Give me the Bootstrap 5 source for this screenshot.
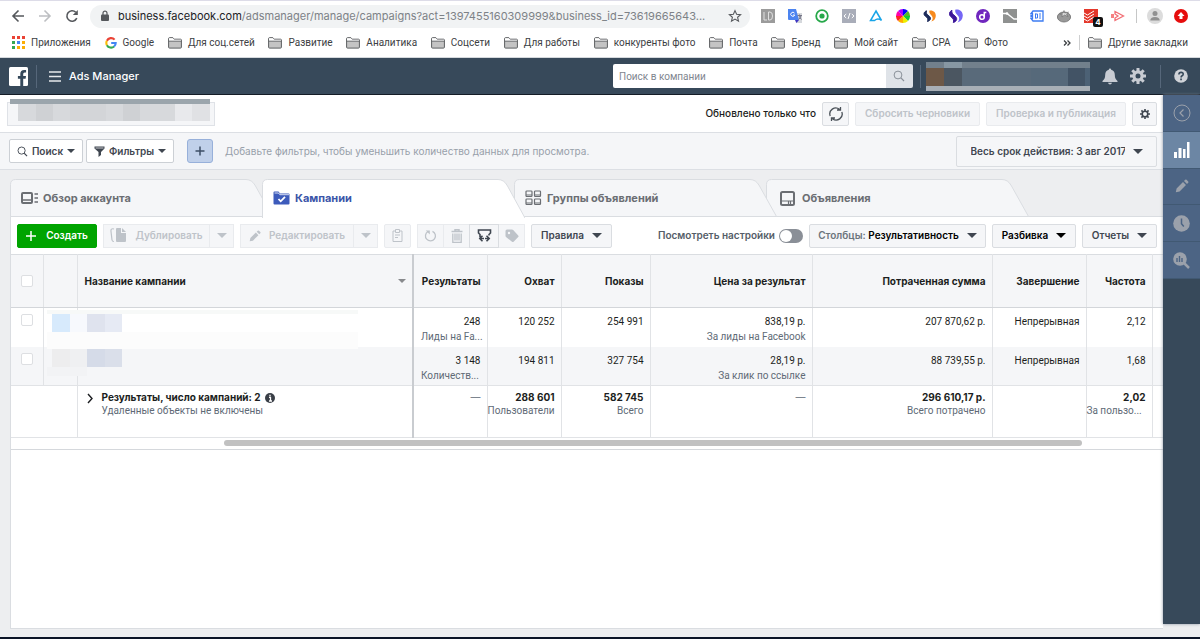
<!DOCTYPE html>
<html lang="ru">
<head>
<meta charset="utf-8">
<meta name="viewport" content="width=device-width, initial-scale=1">
<title>Ads Manager</title>
<link href="https://cdn.jsdelivr.net/npm/bootstrap@5.3.0/dist/css/bootstrap.min.css" rel="stylesheet">
<style>
  :root { --ui: Inter, "Liberation Sans", sans-serif; --text: Roboto, "Liberation Sans", sans-serif; --line: #dadde1; --pale: #f5f6f8; --slate: #37495a; }
  body { font: 10px/15px var(--ui); color: #1c1e21; background: #edeef0; }
  svg { display: block; flex: none; }
  a, a:hover { color: inherit; text-decoration: none; }
  button { font-weight: 600; }

  /* browser chrome */
  .chrome { background: #fff; border-top: 1px solid #dddce8; }
  .chrome-row { height: 30px; padding: 0 12px 0 11px; gap: 13px; }
  .omnibox { background: #f1f3f4; border-radius: 12px; height: 23px; padding: 0 8px 0 10px; font-size: 11px; color: #7d8287; margin-left: -2px; }
  .omnibox b { color: #202124; font-weight: 400; }
  .icon-btn { border: 0; background: none; padding: 0; color: inherit; }
  .extensions { width: 364px; margin-left: -2px; }
  .chrome-rule { margin: 0 -3px 0 -2px; height: 14px; }
  .chrome-end { gap: 11px; }
  .ext-count { position: absolute; left: 9px; top: 8px; width: 10px; height: 10px; background: #111; color: #fff; font: bold 8px/10px var(--ui); text-align: center; border-radius: 2px; }
  .bookmarks { height: 27px; padding: 0 12px 3px; font-family: var(--text); color: #3c4043; border-bottom: 1px solid #d5d9dd; }
  .bookmarks a { display: flex; align-items: center; gap: 6px; white-space: nowrap; }
  .bookmark-list { width: 996px; }

  /* product bar */
  .topbar { background: var(--slate); height: 37px; border-bottom: 1px solid #141c26; color: #fff; padding: 0 12px 0 9px; }
  .topbar .rule { width: 1px; height: 23px; background: #56677a; }
  .topbar .rule-search { margin: 0 5px 0 7px; }
  .topbar .rule-help { margin: 0 13px 0 14px; }
  .brand { font-size: 11px; font-weight: 500; }
  .company-search { width: 300px; height: 24px; }
  .company-search input { border: 0; font: 10px var(--text); padding: 0 6px; border-radius: 2px 0 0 2px; min-width: 0; }
  .company-search input::placeholder { color: #7f868f; opacity: 1; }
  .company-search button { width: 27px; background: #dfe3e8; border: 0; border-radius: 0 2px 2px 0; padding: 0 7px; color: #8a9199; }

  /* controls */
  .tool { height: 24px; padding: 0 8px; display: inline-flex; align-items: center; justify-content: center; gap: 8px; font: 600 10px/15px var(--ui); color: #3f4650; background: var(--pale); border: 1px solid var(--line); border-radius: 2px; white-space: nowrap; }
  .tool:disabled { color: #bec3c9; border-color: #e9ebee; opacity: 1; }
  .tool-plain { background: #fff; border-color: #ccd0d5; gap: 4px; padding: 0 7px; }
  .tool-add { width: 26px; background: #c0d0ea; border-color: #97b0da; border-radius: 3px; padding: 0; margin-left: 10px; }
  .tool-create, .tool-create:hover { background: #00a400; border-color: #00a400; color: #fff; gap: 10px; }
  .caret { width: 0; border: 5px solid transparent; border-top-color: currentColor; border-bottom: 0; flex: none; }
  .caret-sm { border-width: 4px 4px 0; }
  .segment .tool { border-radius: 0; padding: 0; }
  .segment .tool + .tool { margin-left: -1px; }
  .w-drop { width: 25px; } .w-icon { width: 27px; }
  .w-export { width: 30px; }
  .w-create { width: 80px; } .w-dup { width: 107px; } .w-edit { width: 114px; } .w-rules { width: 81px; }
  .w-cols { width: 177px; } .w-split { width: 84px; } .w-reports { width: 75px; } .w-reset { width: 125px; } .w-check { width: 140px; }
  .w-search { width: 74px; } .w-filter { width: 88px; }
  .account-row { background: #fff; height: 37px; padding: 0 6px 0 7px; gap: 6px; }
  .account-box { width: 208px; height: 24px; background: #f5f6f8; border: 1px solid #dfe2e7; }
  .updated { font-size: 10px; font-weight: 500; }
  .filter-row { background: var(--pale); height: 38px; padding: 0 6px 0 9px; gap: 3px; border: solid #dcdfe4; border-width: 1px 0; }
  .hint { color: #98a0aa; padding-left: 9px; }
  .date-tool { width: 201px; height: 31px; }
  .date-tool span:first-child { width: 154px; overflow: hidden; text-align: left; }

  /* tabs */
  .level-tabs { height: 46px; padding: 9px 0 0 10px; }
  .level-tab { width: 263px; height: 38px; margin-right: -11px; border: 0; background: none; padding: 0 11px; color: #6b6e73; font: 700 11px/15px var(--ui); text-align: left; display: flex; align-items: center; gap: 5px; position: relative; }
  .level-tab .shape { position: absolute; inset: 0; z-index: -1; }
  .level-tab .shape path { fill: var(--pale); stroke: var(--line); }
  .level-tab { isolation: isolate; z-index: 1; }
  .level-tab.chosen { z-index: 4; color: #3b55a8; font-weight: 700; }
  .level-tab.chosen .shape path { fill: #fff; }
  .level-tab:nth-child(3) { z-index: 3; } .level-tab:nth-child(4) { z-index: 2; padding-left: 14px; gap: 7px; }
  .sheet { background: #fff; border: solid var(--line); border-width: 1px 0 1px 1px; margin: 0 0 8px 10px; position: relative; }
  .toolbar { height: 37px; padding: 0 6px; gap: 6px; }

  /* switch */
  .preview-switch { width: 24px; height: 14px; appearance: none; border-radius: 7px; background: #8a8f97; position: relative; margin: 0; }
  .preview-switch::before { content: ""; position: absolute; left: 1px; top: 1px; width: 12px; height: 12px; border-radius: 50%; background: #fff; }
  .preview-group { gap: 4px; }
  .preview-label { color: #555d68; font-weight: 600; }

  /* campaign table */
  .campaigns { table-layout: fixed; width: 100%; border-collapse: collapse; border-top: 1px solid var(--line); }
  .campaigns th, .campaigns td { border-right: 1px solid #e1e3e6; padding: 6px 6px 0 7px; text-align: right; vertical-align: top; white-space: nowrap; font: 10px/15px var(--text); }
  .campaigns th:last-child, .campaigns td:last-child { border-right: 0; }
  .campaigns thead th { background: var(--pale); height: 53px; vertical-align: middle; padding-top: 0; font: 700 10px/15px var(--ui); border-bottom: 1px solid #d3d6da; }
  .campaigns .name-col { border-right: 2px solid #c9ccd0; text-align: left; }
  .campaigns tbody tr { height: 39px; }
  .campaigns tbody tr:nth-child(2) td { background: var(--pale); border-bottom: 1px solid #e1e3e6; }
  .campaigns small { display: block; font-size: 10px; color: #606a76; }
  .campaigns tfoot tr { height: 52px; }
  .campaigns tfoot td { padding: 5px 6px 0 0; font: 700 10px/13px var(--ui); border-bottom: 1px solid #e1e3e6; }
  .campaigns tfoot small { font: 10px/13px var(--text); }
  .campaigns .dash { color: #606a76; font-weight: 400; }
  .campaigns input { appearance: none; display: block; width: 12px; height: 12px; border: 1px solid #dddfe2; border-radius: 2px; background: #fff; margin: 0 0 0 3px; }
  .hidden-names { position: absolute; left: 36px; top: 56px; }
  .scroll-track { height: 12px; padding-top: 2px; border-bottom: 1px solid #d5d8dc; }
  .scroll-thumb { height: 6px; border-radius: 3px; background: #c1c1c1; }

  /* right rail */
  .rail { width: 37px; background: var(--slate); margin-bottom: 13px; box-shadow: 0 0 3px #8a94a0; z-index: 5; }
  .rail-items { display: grid; grid-auto-rows: 1fr; height: 184px; }
  .rail-items button { border: 0; border-bottom: 1px solid #415973; background: #4c6484; color: #9ba1ab; display: flex; align-items: center; justify-content: center; padding: 0; }
  .rail-items button.on { background: #6c86a4; color: #fff; }
  .window-edge { height: 2px; background: #0b1426; }
</style>
</head>
<body class="d-flex flex-column min-vh-100">

<svg width="0" height="0" class="position-absolute" aria-hidden="true">
  <symbol id="folder" viewBox="0 0 14 12"><path d="M.6 10.2V1.6q0-.9.9-.9h3.4l1.3 1.5h6.3q.9 0 .9.9v7.1q0 .9-.9.9h-11q-.9 0-.9-.9z" fill="#c4c4c4" stroke="#5c5e61"/><path d="M1 1.2h4l1.2 1.5H13v1.1H1z" fill="#fff"/><path d="M.6 4.2h12.8" stroke="#5c5e61" stroke-width=".8"/></symbol>
  <symbol id="lens" viewBox="0 0 12 12"><circle cx="5" cy="5" r="3.9" fill="none" stroke="currentColor"/><path d="M7.9 7.9 11 11" stroke="currentColor" stroke-width="1.2"/></symbol>
  <symbol id="cog" viewBox="0 0 16 16"><circle cx="8" cy="8" r="4.1" fill="none" stroke="currentColor" stroke-width="3.2"/><path d="M8 0v3M8 13v3M0 8h3M13 8h3M2.3 2.3l2.2 2.2M11.5 11.5l2.2 2.2M2.3 13.7l2.2-2.2M11.5 4.5l2.2-2.2" stroke="currentColor" stroke-width="3"/></symbol>
  <symbol id="pencil" viewBox="0 0 14 14"><path d="M.8 13.2 1.6 9.4 8 3l3 3-6.4 6.4zM9 2l1.2-1.2q.7-.6 1.4 0L13.2 2.4q.6.7 0 1.4L12 5z" fill="currentColor"/></symbol>
</svg>

<header class="chrome">
  <div class="chrome-row d-flex align-items-center">
    <button class="icon-btn" aria-label="Назад"><svg width="14" height="14" viewBox="0 0 14 14" fill="none" stroke="#55585c" stroke-width="1.6"><path d="M13 7H2M7.5 1.500 2 7l5.500 5.500"/></svg></button>
    <button class="icon-btn" aria-label="Вперёд"><svg width="14" height="14" viewBox="0 0 14 14" fill="none" stroke="#bdbfc2" stroke-width="1.600"><path d="M1 7h11M6.500 1.500 12 7l-5.500 5.500"/></svg></button>
    <button class="icon-btn" aria-label="Обновить"><svg width="14" height="14" viewBox="0 0 14 14"><path d="M11.800 9.200A5.200 5.200 0 1 1 10.800 3.300" fill="none" stroke="#55585c" stroke-width="1.600"/><path d="M12.800 1v5H7.800z" fill="#55585c"/></svg></button>
    <div class="omnibox d-flex align-items-center flex-grow-1 gap-2">
      <svg width="10" height="12" viewBox="0 0 10 12"><rect x="1" y="4.500" width="8" height="6.500" rx="1" fill="#55585c"/><path d="M3 5V3.200a2 2 0 0 1 4 0V5" fill="none" stroke="#55585c" stroke-width="1.200"/></svg>
      <span class="flex-grow-1 text-nowrap"><b>business.facebook.com</b>/adsmanager/manage/campaigns?act=1397455160309999&amp;business_id=73619665643...</span>
      <button class="icon-btn" aria-label="В закладки"><svg width="14" height="14" viewBox="0 0 14 14"><path d="m7 1.600 1.600 3.700 4 .3-3 2.700.9 3.900L7 10.100l-3.500 2.100.9-3.900-3-2.700 4-.3z" fill="none" stroke="#55585c" stroke-width="1.100"/></svg></button>
    </div>
    <div class="extensions d-flex align-items-center justify-content-between">
      <svg width="14" height="14" viewBox="0 0 14 14"><path fill="#9b9b9b" d="M0 0h14v14H0z"/><path d="M3 3v8h3M7.500 3v8h1.500q2.500 0 2.500-4t-2.500-4z" fill="none" stroke="#e0e0e0"/></svg>
      <svg width="14" height="14" viewBox="0 0 14 14"><path d="M5 4h9v10H8z" fill="#d5d8dc"/><path d="M0 0h8l3 11H1q-1 0-1-1z" fill="#4c84f0"/><path d="m7 11 4 0-2.500 3z" fill="#3d33c5"/><path d="M6.500 4.200A2 2 0 1 0 6.700 6H5" fill="none" stroke="#fff"/><path d="M9.500 6.500H14M11.500 5.500v1q0 2.500 2 4M13 6.500q0 2-2.500 4" fill="none" stroke="#778"/></svg>
      <svg width="14" height="14" viewBox="0 0 14 14"><circle cx="7" cy="7" r="5.800" fill="#fff" stroke="#27a84a" stroke-width="1.800"/><circle cx="7" cy="7" r="2.600" fill="#27a84a"/></svg>
      <svg width="14" height="14" viewBox="0 0 14 14"><path fill="#a9adb9" d="M0 0h14v14H0z"/><path d="M4.200 5 2 7l2.200 2M9.800 5 12 7l-2.200 2M8 4 6 10" fill="none" stroke="#fff"/></svg>
      <svg width="14" height="14" viewBox="0 0 14 14"><path d="M7 2 12.500 11.500q-3.500-3-7 0H1.500z" fill="none" stroke="#18a5e8" stroke-width="1.500"/></svg>
      <svg width="14" height="14" viewBox="0 0 14 14"><path d="M7 7V0a7 7 0 0 1 5 2z" fill="#00f"/><path d="m7 7 5-5a7 7 0 0 1 2 5z" fill="#5b2"/><path d="M7 7h7a7 7 0 0 1-2 5z" fill="#1c3"/><path d="m7 7 5 5a7 7 0 0 1-5 2z" fill="#ee0"/><path d="M7 7v7a7 7 0 0 1-5-2z" fill="#fa0"/><path d="m7 7-5 5a7 7 0 0 1-2-5z" fill="#f22"/><path d="M7 7H0a7 7 0 0 1 2-5z" fill="#f0a"/><path d="M7 7 2 2a7 7 0 0 1 5-2z" fill="#a0f"/></svg>
      <svg width="14" height="14" viewBox="0 0 14 14"><path d="M3.500 1.800C.5 3 .3 5.800 2.500 7.300S5.500 10.500 4.500 12.500C8 11.500 8.300 8.500 6 7S2.800 3.800 3.500 1.800z" fill="#1d2b5a" stroke="#1d2b5a"/><path d="M6.500 1.500c4-.5 6.500 2 6.300 5.500-.2 3-2 5-4.500 5.500C10 10.500 10.200 8.300 8.500 6.500S5.800 3.500 6.500 1.500z" fill="#f78a1d"/></svg>
      <svg width="14" height="14" viewBox="0 0 14 14"><path d="M3 1.300C-.2 2.800-.3 6 2 7.800s3.300 3.700 2.300 5.700C8.200 12.500 8.700 9 6 7S2.300 3.500 3 1.300z" fill="#3c1599" stroke="#3c1599"/><path d="M6.500.5c4.500-.7 7.500 2.300 7.300 6.300-.2 3.500-2.300 6-5.300 6.700 2-2.300 2.300-5 .3-7S5.600 2.800 6.500.5z" fill="#7566f5"/></svg>
      <svg width="14" height="14" viewBox="0 0 14 14"><circle cx="7" cy="7" r="7" fill="#7027be"/><circle cx="6" cy="8" r="2.300" fill="none" stroke="#fff" stroke-width="1.500"/><path d="M8.300 8V3.500h2" fill="none" stroke="#fff" stroke-width="1.500"/></svg>
      <svg width="14" height="14" viewBox="0 0 14 14"><path fill="#8f9190" d="M0 0h14v14H0z"/><path d="M0 4.500h4L11 10h3" fill="none" stroke="#fff" stroke-width="1.300"/><circle cx="4" cy="4.500" r="1.300" fill="#fff"/></svg>
      <svg width="14" height="14" viewBox="0 0 14 14"><path d="M3 2h10v10H3L1 9.500h1.500v-2H1v-1h1.500v-2H1z" fill="#fff" stroke="#3d7cf2" stroke-width="1.300"/><path d="M5.500 4.500v5M5.500 5h2v4h-2M9 5h2M9 7h2M9 9h2" fill="none" stroke="#3d7cf2"/></svg>
      <svg width="14" height="14" viewBox="0 0 14 14"><ellipse cx="7" cy="8" rx="6.600" ry="5" fill="#999" stroke="#6d6d6d" stroke-width=".8"/><path d="M7 1.500 7.700 4l3.800-.8L9.500 5l1.500 2.500L7.500 6 5 8l.3-2.500L2.500 5l3.700-1z" fill="#ddd" stroke="#666" stroke-width=".6"/></svg>
      <span class="position-relative"><svg width="14" height="14" viewBox="0 0 14 14"><path fill="#e4372b" d="M0 0h14v14H0z"/><path d="m0 4 3.500 2L10 2M0 7l3.500 2L10 5M0 10l3.500 2L10 8" fill="none" stroke="#fff"/></svg><span class="ext-count">4</span></span>
      <svg width="14" height="14" viewBox="0 0 14 14"><path d="M0 5h3v4H0z" fill="#f68080"/><path d="M4 2.500V5l3 2-3 2v2.500L12.500 7z" fill="none" stroke="#f26e74" stroke-width="1.300"/></svg>
    </div>
    <div class="vr chrome-rule align-self-center"></div>
    <div class="chrome-end d-flex align-items-center">
      <button class="icon-btn" aria-label="Профиль"><svg width="16" height="16" viewBox="0 0 16 16"><circle cx="8" cy="8" r="8" fill="#dcdcdc"/><circle cx="8" cy="5.500" r="2.500" fill="#919191"/><path d="M3.300 12.500q0-3.500 4.700-3.500t4.700 3.500z" fill="#919191"/></svg></button>
      <button class="icon-btn" aria-label="Обновление"><svg width="14" height="14" viewBox="0 0 14 14"><circle cx="7" cy="7" r="7" fill="#e60d0d"/><path d="M7 3 3.500 7H5.500v3h3V7h2z" fill="#fff"/></svg></button>
    </div>
  </div>
  <nav class="bookmarks d-flex align-items-center justify-content-between">
    <div class="bookmark-list d-flex justify-content-between">
      <a href="#"><svg width="13" height="13" viewBox="0 0 13 13"><path d="M0 0h3v3H0zM5 0h3v3H5zM10 0h3v3h-3z" fill="#ea4335"/><path d="M0 5h3v3H0z" fill="#34a853"/><path d="M5 5h3v3H5z" fill="#4285f4"/><path d="M10 5h3v3h-3zM5 10h3v3H5zM10 10h3v3h-3z" fill="#fbae05"/><path d="M0 10h3v3H0z" fill="#34a853"/></svg>Приложения</a>
      <a href="#"><svg width="12" height="12" viewBox="0 0 12 12" fill="none" stroke-width="2.100"><path d="M9.600 2.600A4.700 4.700 0 0 0 1.900 3.800" stroke="#ea4335"/><path d="M1.900 3.800a4.700 4.700 0 0 0 0 4.400" stroke="#fbbc05"/><path d="M1.900 8.200a4.700 4.700 0 0 0 7.200 1.300" stroke="#34a853"/><path d="M9.100 9.500A4.700 4.700 0 0 0 10.700 6H6.200" stroke="#4285f4"/></svg>Google</a>
      <a href="#"><svg width="14" height="12"><use href="#folder"/></svg>Для соц.сетей</a>
      <a href="#"><svg width="14" height="12"><use href="#folder"/></svg>Развитие</a>
      <a href="#"><svg width="14" height="12"><use href="#folder"/></svg>Аналитика</a>
      <a href="#"><svg width="14" height="12"><use href="#folder"/></svg>Соцсети</a>
      <a href="#"><svg width="14" height="12"><use href="#folder"/></svg>Для работы</a>
      <a href="#"><svg width="14" height="12"><use href="#folder"/></svg>конкуренты фото</a>
      <a href="#"><svg width="14" height="12"><use href="#folder"/></svg>Почта</a>
      <a href="#"><svg width="14" height="12"><use href="#folder"/></svg>Бренд</a>
      <a href="#"><svg width="14" height="12"><use href="#folder"/></svg>Мой сайт</a>
      <a href="#"><svg width="14" height="12"><use href="#folder"/></svg>CPA</a>
      <a href="#"><svg width="14" height="12"><use href="#folder"/></svg>Фото</a>
    </div>
    <div class="d-flex align-items-center gap-2">
      <button class="icon-btn" aria-label="Ещё закладки"><svg width="8" height="8" viewBox="0 0 8 8" fill="none" stroke="#3c4043" stroke-width="1.300"><path d="m1 1.500 2.500 2.500L1 6.500M4.500 1.500 7 4 4.500 6.500"/></svg></button>
      <div class="vr"></div>
      <a href="#"><svg width="14" height="12"><use href="#folder"/></svg>Другие закладки</a>
    </div>
  </nav>
</header>

<nav class="topbar d-flex align-items-center">
  <a href="#" aria-label="Facebook"><svg width="19" height="19" viewBox="0 0 19 19"><rect width="19" height="19" rx="1.500" fill="#fff"/><path d="M11.300 19v-7.200H8.900V8.900h2.400V6.800q0-3.900 3.900-3.900h1.900v2.700h-1.400q-1.500 0-1.500 1.500v1.800H17l-.4 2.900h-2.400V19z" fill="#34485a"/></svg></a>
  <div class="rule ms-2"></div>
  <button class="icon-btn ms-2 ps-1 pe-2" aria-label="Меню"><svg width="12" height="11" viewBox="0 0 12 11"><path d="M0 1h12M0 5.500h12M0 10h12" stroke="#e6e9ec" stroke-width="1.500"/></svg></button>
  <span class="brand">Ads Manager</span>
  <form class="company-search d-flex ms-auto" role="search">
    <input type="search" class="flex-grow-1" placeholder="Поиск в компании" aria-label="Поиск в компании">
    <button type="button" aria-label="Найти"><svg width="12" height="12"><use href="#lens"/></svg></button>
  </form>
  <div class="rule rule-search"></div>
  <svg width="164" height="29" viewBox="0 0 164 29" shape-rendering="crispEdges"><path fill="#596a7a" d="M0 0h164v29H0z"/><path fill="#72808c" d="M0 0h164v6H0z"/><path fill="#8797a3" d="M18 0h18v6H18z"/><path fill="#6d5847" d="M0 6h18v18H0z"/><path fill="#4b5661" d="M18 6h18v18H18z"/><path fill="#56697a" d="M105 6h37v18h-37z"/><path fill="#425365" d="M142 6h17v18h-17z"/><path fill="#4c6175" d="M159 6h5v18h-5z"/><path fill="#a8afb6" d="M0 24h164v5H0z"/></svg>
  <button class="icon-btn ms-2 ps-1" aria-label="Уведомления"><svg width="16" height="17" viewBox="0 0 16 17" fill="#c8ccd3"><path d="M8 .5q1.200 0 1.200 1.300 3.600 1 3.600 5 0 4.300 2.700 6.200v1H.5v-1q2.700-1.900 2.700-6.200 0-4 3.600-5Q6.800.5 8 .5zM6 14.800h4q-.4 1.700-2 1.700t-2-1.700z"/></svg></button>
  <button class="icon-btn ms-2 ps-1" aria-label="Настройки"><svg width="16" height="16" color="#c8ccd3"><use href="#cog"/></svg></button>
  <div class="rule rule-help"></div>
  <button class="icon-btn" aria-label="Справка"><svg width="14" height="14" viewBox="0 0 14 14"><circle cx="7" cy="7" r="6.800" fill="#d0d3d8"/><path d="M4.900 5.500q0-2.100 2.200-2.100t2.100 1.800q0 1-1.100 1.600T7.100 8.500" fill="none" stroke="#37495a" stroke-width="1.600"/><path d="M6.200 9.500h1.700v1.700H6.200z" fill="#37495a"/></svg></button>
</nav>

<div class="d-flex flex-grow-1">
  <main class="d-flex flex-column flex-grow-1 overflow-hidden">
    <div class="account-row d-flex align-items-center">
      <div class="account-box position-relative me-auto"><svg class="position-absolute bottom-0 start-0" width="203" height="27" viewBox="0 0 203 27" shape-rendering="crispEdges"><path fill="#9ba5ac" d="M2 1h200v5H2z"/><path fill="#d7d9dc" d="M10 6h157v17H10z"/><path fill="#cfd1d4" d="M28 6h17v17H28zM115 6h17v17h-17z"/><path fill="#d3d5d8" d="M62 6h36v17H62z"/><path fill="#e8e9ec" d="M167 6h17v17h-17z"/><path fill="#e0e1e4" d="M184 6h18v17h-18z"/></svg></div>
      <span class="updated">Обновлено только что</span>
      <button class="tool w-icon p-0" aria-label="Обновить данные"><svg width="16" height="16" viewBox="0 0 16 16" fill="none" stroke="#4b5259" stroke-width="1.300"><path d="M2.200 10A6 6 0 0 1 11.500 3.200M13.800 6a6 6 0 0 1-9.300 6.800M12.500 1v3H9M3.500 15v-3H7"/></svg></button>
      <button class="tool w-reset" disabled>Сбросить черновики</button>
      <button class="tool w-check" disabled>Проверка и публикация</button>
      <button class="tool w-drop p-0" aria-label="Параметры"><svg width="10" height="10" viewBox="0 0 16 16" fill="none" stroke="currentColor"><circle cx="8" cy="8" r="4.500" stroke-width="2.600"/><path d="M8 0v3M8 13v3M0 8h3M13 8h3M2.300 2.300l2.200 2.200M11.500 11.500l2.200 2.200M2.300 13.700l2.200-2.200M11.500 4.500l2.200-2.200" stroke-width="2.600"/></svg></button>
    </div>

    <div class="filter-row d-flex align-items-center">
      <button class="tool tool-plain w-search"><svg width="11" height="11" viewBox="0 0 12 12"><use href="#lens"/></svg>Поиск<span class="caret caret-sm"></span></button>
      <button class="tool tool-plain w-filter"><svg width="11" height="11" viewBox="0 0 11 11"><path d="M.5.500h10v2L7 6v3l-2.500 2V6L.5 2.500z" fill="currentColor"/><path d="M1.500 2h8" stroke="#fff" stroke-width=".7"/></svg>Фильтры<span class="caret caret-sm"></span></button>
      <button class="tool tool-add" aria-label="Добавить фильтр"><svg width="10" height="10" viewBox="0 0 10 10"><path d="M5 .5v9M.5 5h9" stroke="#3d4d66" stroke-width="1.500"/></svg></button>
      <span class="hint me-auto">Добавьте фильтры, чтобы уменьшить количество данных для просмотра.</span>
      <button class="tool date-tool"><span>Весь срок действия: 3 авг 2017</span><span class="caret"></span></button>
    </div>

    <div class="level-tabs d-flex" role="tablist">
      <button class="level-tab" role="tab"><svg class="shape" width="263" height="38" viewBox="0 0 263 38"><path d="M.5 37.500V5.500q0-5 5-5H236q6 0 9.500 6.500L262.500 37.500z"/></svg><svg width="17" height="12" viewBox="0 0 17 12" fill="none" stroke="currentColor" stroke-width="2"><rect x="1" y="1" width="10" height="10" rx="1"/><path d="M1 8h10" stroke-width="1.500"/><path d="M13.500 2H17M13.500 6H17M13.500 10H17" stroke-width="1.500"/></svg>Обзор аккаунта</button>
      <button class="level-tab chosen" role="tab" aria-selected="true"><svg class="shape" width="263" height="39" viewBox="0 0 263 39"><path d="M.5 39V5.500q0-5 5-5H236q6 0 9.500 6.500L263 39"/></svg><svg width="17" height="14" viewBox="0 0 17 14"><path d="M.5 12.500v-11q0-1 1-1h4l1.500 2h8.500q1 0 1 1v9q0 1-1 1h-14q-1 0-1-1z" fill="#3d5bbb"/><path d="M1.500 2h4l1.300 1.700H16" stroke="#fff" stroke-width=".8" fill="none"/><path d="m5.500 8 2.200 2.300L12 5.800" fill="none" stroke="#fff" stroke-width="1.800"/></svg>Кампании</button>
      <button class="level-tab" role="tab"><svg class="shape" width="263" height="38" viewBox="0 0 263 38"><path d="M.5 37.500V5.500q0-5 5-5H236q6 0 9.500 6.500L262.500 37.500z"/></svg><svg width="17" height="16" viewBox="0 0 17 16" fill="none" stroke="currentColor" stroke-width="1.200"><rect x="1" y="1" width="6" height="5.500" rx=".8"/><rect x="9.500" y="1" width="6" height="5.500" rx=".8"/><rect x="1" y="9" width="6" height="5.500" rx=".8"/><rect x="9.500" y="9" width="6" height="5.500" rx=".8"/><path d="M1 5h6M9.500 5h6M1 13h6M9.500 13h6"/></svg>Группы объявлений</button>
      <button class="level-tab" role="tab"><svg class="shape" width="263" height="38" viewBox="0 0 263 38"><path d="M.5 37.500V5.500q0-5 5-5H236q6 0 9.500 6.500L262.500 37.500z"/></svg><svg width="15" height="15" viewBox="0 0 15 15" fill="none" stroke="currentColor"><rect x="1" y="1" width="13" height="13" rx="1.500" stroke-width="2"/><path d="M2 10h11M8.500 10v3M10.500 10v3" stroke-width="1.200"/></svg>Объявления</button>
    </div>

    <section class="sheet flex-grow-1">
      <div class="toolbar d-flex align-items-center">
        <button class="tool tool-create w-create"><svg width="10" height="10" viewBox="0 0 10 10"><path d="M5 0v10M0 5h10" stroke="#fff" stroke-width="1.500"/></svg>Создать</button>
        <div class="segment d-flex">
          <button class="tool w-dup" disabled><svg width="17" height="15" viewBox="0 0 17 15"><path d="M4 1Q.5 0 1 3.500L2 12q.2 1.500 2 1.500" fill="none" stroke="currentColor" stroke-width="1.200"/><path d="M6 1q0-1 1-1h4v5h5v8q0 1-1 1H7q-1 0-1-1zM12 0l4 4h-4z" fill="currentColor"/></svg>Дублировать</button>
          <button class="tool w-drop" disabled aria-label="Ещё"><span class="caret"></span></button>
        </div>
        <div class="segment d-flex">
          <button class="tool w-edit" disabled><svg width="12" height="12"><use href="#pencil"/></svg>Редактировать</button>
          <button class="tool w-drop" disabled aria-label="Ещё"><span class="caret"></span></button>
        </div>
        <button class="tool w-icon p-0" disabled aria-label="Вставить"><svg width="11" height="13" viewBox="0 0 11 13" fill="none" stroke="currentColor"><path d="M3 2H1v10.500h9V2H8M3.500.500h4v3h-4zM3 6h5M3 8.500h3"/></svg></button>
        <div class="segment d-flex">
          <button class="tool w-icon" disabled aria-label="Отменить"><svg width="13" height="13" viewBox="0 0 13 13"><path d="M4 2.500A5 5 0 1 0 8.500 2.300" fill="none" stroke="currentColor" stroke-width="1.300"/><path d="M1.800 1.500h4v4z" fill="currentColor"/></svg></button>
          <button class="tool w-icon" disabled aria-label="Удалить"><svg width="12" height="14" viewBox="0 0 12 14" fill="none" stroke="currentColor"><path d="M.5 2.500h11M4 2V.700h4V2" stroke-width="1.500"/><path d="M1.800 4.500v8.800h8.400V4.500M4 4.500v7M6 4.500v7M8 4.500v7" stroke-width="1.300"/></svg></button>
          <button class="tool w-export position-relative" aria-label="Импорт и экспорт"><svg width="15" height="14" viewBox="0 0 15 14" fill="none" stroke="currentColor" stroke-width="1.600"><path d="M3.500 7.500H3V5.500L1.500 4V1h12v3L12 5.500v1M7 9.500H3M5.500 6.800 2.800 9.500l2.700 2.700M8 9.500h4M9.500 6.800l2.700 2.700-2.700 2.700"/></svg></button>
          <button class="tool w-icon" disabled aria-label="Метки"><svg width="14" height="14" viewBox="0 0 14 14"><path fill-rule="evenodd" d="M.5 2q0-1.500 1.500-1.500h5q.7 0 1.200.5l5 5.500q.8.800 0 1.600l-4.600 4.600q-.8.800-1.600 0L1 8Q.5 7.500.5 6.800zM4 2.800a1.200 1.200 0 1 0 0 2.400 1.200 1.200 0 0 0 0-2.400z" fill="currentColor"/></svg></button>
        </div>
        <button class="tool w-rules">Правила<span class="caret"></span></button>
        <div class="preview-group d-flex align-items-center ms-auto">
          <label class="preview-label" for="preview">Посмотреть настройки</label>
          <input class="preview-switch" type="checkbox" role="switch" id="preview">
        </div>
        <button class="tool w-cols"><span><span class="text-secondary">Столбцы:</span> <span class="text-black">Результативность</span></span><span class="caret"></span></button>
        <button class="tool w-split text-black">Разбивка<span class="caret"></span></button>
        <button class="tool w-reports">Отчеты<span class="caret"></span></button>
      </div>

      <div class="position-relative">
        <table class="campaigns">
          <colgroup><col width="32"><col width="34"><col><col width="74"><col width="74"><col width="89"><col width="162"><col width="180"><col width="94"><col width="66"><col width="11"></colgroup>
          <thead><tr>
            <th><input type="checkbox" aria-label="Выбрать все"></th><th></th>
            <th class="name-col"><div class="d-flex align-items-center justify-content-between">Название кампании<span class="caret caret-sm opacity-50"></span></div></th>
            <th>Результаты</th><th>Охват</th><th>Показы</th><th>Цена за результат</th><th>Потраченная сумма</th><th>Завершение</th><th>Частота</th><th></th>
          </tr></thead>
          <tbody>
            <tr><td><input type="checkbox" aria-label="Выбрать кампанию 1"></td><td></td><td class="name-col"></td><td>248<small class="text-start">Лиды на Fa...</small></td><td>120 252</td><td>254 991</td><td>838,19 р.<small>За лиды на Facebook</small></td><td>207 870,62 р.</td><td>Непрерывная</td><td>2,12</td><td></td></tr>
            <tr><td><input type="checkbox" aria-label="Выбрать кампанию 2"></td><td></td><td class="name-col"></td><td>3 148<small class="text-start">Количеств...</small></td><td>194 811</td><td>327 754</td><td>28,19 р.<small>За клик по ссылке</small></td><td>88 739,55 р.</td><td>Непрерывная</td><td>1,68</td><td></td></tr>
          </tbody>
          <tfoot><tr>
            <td class="border-end-0"></td><td></td>
            <td class="name-col"><div class="d-flex align-items-start"><button class="icon-btn mx-2" aria-label="Развернуть"><svg width="8" height="13" viewBox="0 0 8 13"><path d="m2 3 4 4.500L2 12" fill="none" stroke="#1c1e21" stroke-width="1.400"/></svg></button><div><span class="d-flex align-items-center gap-1">Результаты, число кампаний: 2 <svg width="10" height="10" viewBox="0 0 10 10"><circle cx="5" cy="5" r="5" fill="#3a3f47"/><path d="M4 4.300h1.500V8M4 8h3M5 1.800v1.400" stroke="#fff" fill="none" stroke-width="1.300"/></svg></span><small>Удаленные объекты не включены</small></div></div></td>
            <td class="dash">—</td><td>288 601<small>Пользователи</small></td><td>582 745<small>Всего</small></td><td class="dash">—</td><td>296 610,17 р.<small>Всего потрачено</small></td><td></td><td>2,02<small class="text-start">За пользо...</small></td><td></td>
          </tr></tfoot>
        </table>
        <svg class="hidden-names" width="311" height="66" viewBox="0 0 311 66" shape-rendering="crispEdges"><path fill="#fff" d="M0 0h311v39H0z"/><path fill="#f7f9f8" d="M0 0h311v4H0z"/><path fill="#fcfcfc" d="M0 22h311v17H0z"/><path fill="#d7eafc" d="M5 4h18v18H5z"/><path fill="#f7f9fd" d="M23 4h17v18H23z"/><path fill="#dfe3ee" d="M40 4h18v18H40z"/><path fill="#e6eaf4" d="M58 4h17v18H58z"/><path fill="#ededee" d="M5 39h18v18H5z"/><path fill="#eff0f2" d="M23 39h17v18H23z"/><path fill="#d5dbe8" d="M40 39h18v18H40z"/><path fill="#dadfea" d="M58 39h17v18H58z"/><path fill="#f2f3f5" d="M0 57h40v9H0z"/></svg>
      </div>
      <div class="scroll-track"><div class="scroll-thumb" style="margin-left:18.5%;width:74.5%"></div></div>
    </section>
  </main>

  <aside class="rail flex-shrink-0">
    <div class="rail-items">
      <button aria-label="Свернуть"><svg width="18" height="18" viewBox="0 0 18 18" fill="none" stroke="currentColor"><circle cx="9" cy="9" r="8"/><path d="M10.500 5.500 7 9l3.500 3.500" stroke-width="1.200"/></svg></button>
      <button class="on" aria-label="Диаграммы"><svg width="16" height="16" viewBox="0 0 16 16" fill="currentColor"><path d="M0 10h3v6H0zM4.500 6h3v10h-3zM9 7h2.500v9H9zM13 0h2.500v16H13z"/></svg></button>
      <button aria-label="Редактировать"><svg width="14" height="14"><use href="#pencil"/></svg></button>
      <button aria-label="История"><svg width="17" height="17" viewBox="0 0 17 17"><circle cx="8.500" cy="8.500" r="8.300" fill="currentColor"/><path d="M8.500 3.500v5.300l2.300 2.600" fill="none" stroke="#4c6484" stroke-width="1.500"/></svg></button>
      <button aria-label="Анализ"><svg width="17" height="17" viewBox="0 0 17 17"><circle cx="7" cy="7" r="6.800" fill="currentColor"/><path d="m11 11 5 5" stroke="currentColor" stroke-width="2.500"/><path d="M4 6v4M6.500 4v6M9 6v4" stroke="#4c6484" stroke-width="1.400"/></svg></button>
    </div>
  </aside>
</div>
<div class="window-edge"></div>

<script src="https://cdn.jsdelivr.net/npm/bootstrap@5.3.0/dist/js/bootstrap.bundle.min.js"></script>
</body>
</html>
